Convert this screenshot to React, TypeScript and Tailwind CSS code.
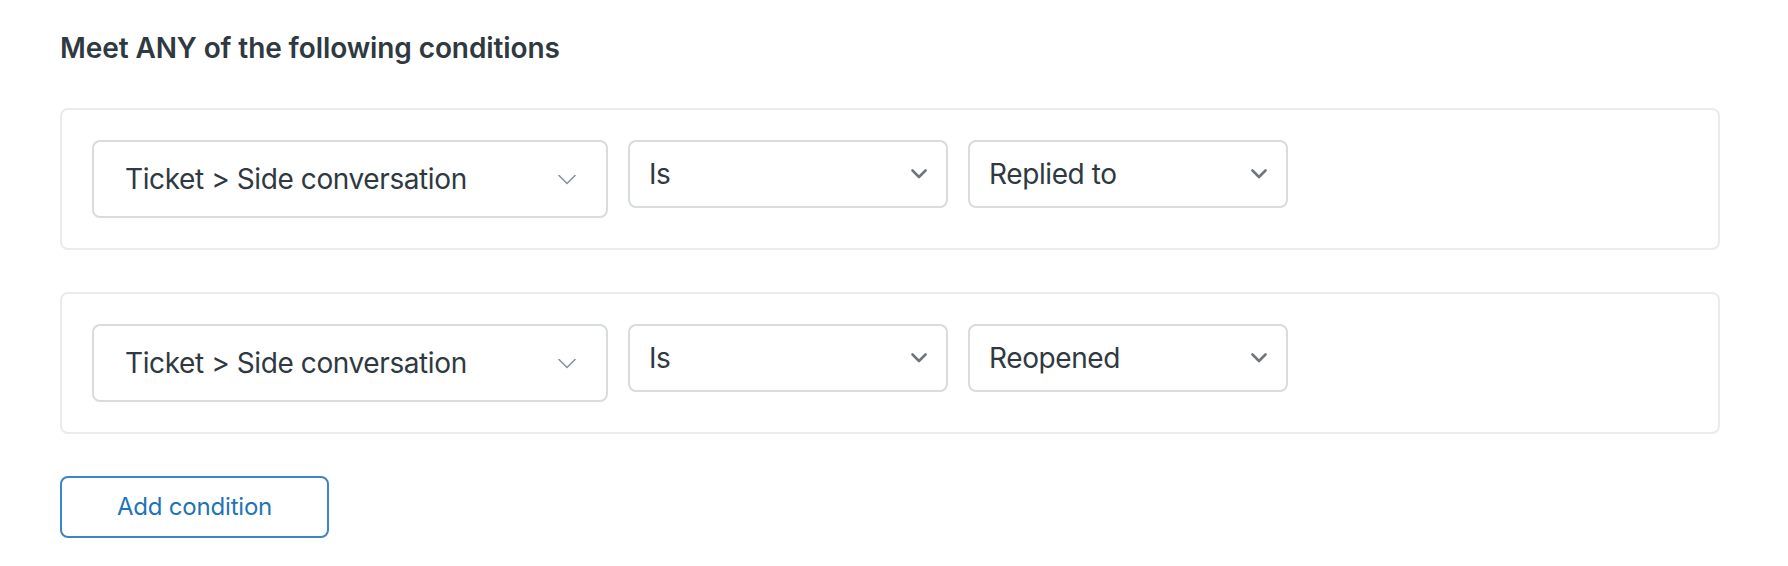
interface Condition {
  field: string;
  operator: string;
  value: string;
}

const CONDITIONS: Condition[] = [
  { field: 'Ticket > Side conversation', operator: 'Is', value: 'Replied to' },
  { field: 'Ticket > Side conversation', operator: 'Is', value: 'Reopened' },
];

function ThinChevron() {
  return (
    <svg width="18" height="11" viewBox="0 0 18 11" fill="none" className="shrink-0">
      <path d="M1 1.5 L9 9.5 L17 1.5" stroke="#87929d" strokeWidth="1.6" strokeLinecap="round" strokeLinejoin="round" />
    </svg>
  );
}

function BoldChevron() {
  return (
    <svg width="16" height="10" viewBox="0 0 16 10" fill="none" className="shrink-0">
      <path d="M1.5 1.5 L8 8 L14.5 1.5" stroke="#6f767c" strokeWidth="2.6" strokeLinecap="round" strokeLinejoin="round" />
    </svg>
  );
}

export default function App() {
  return (
    <div className="w-[1788px] h-[566px] bg-white pl-[60px] pt-[30px] font-['Inter',sans-serif] text-[#2f3941]">
      <h2 className="text-[28px] leading-[36px] font-semibold tracking-[-0.1px]">Meet ANY of the following conditions</h2>

      <div className="mt-[42px] flex flex-col gap-[42px] w-[1660px]">
        {CONDITIONS.map((c, i) => (
          <div key={i} className="rounded-[8px] border-2 border-[#e9ebed] p-[30px] flex items-start gap-[20px]">
            <div className="w-[516px] h-[78px] rounded-[8px] border-2 border-[#d8dcde] pl-[31px] pr-[30px] flex items-center justify-between">
              <span className="text-[28px] tracking-[-0.4px]">{c.field}</span>
              <ThinChevron />
            </div>
            <div className="w-[320px] h-[68px] rounded-[8px] border-2 border-[#d8dcde] pl-[19px] pr-[19px] flex items-center justify-between">
              <span className="text-[28px] tracking-[-0.4px]">{c.operator}</span>
              <BoldChevron />
            </div>
            <div className="w-[320px] h-[68px] rounded-[8px] border-2 border-[#d8dcde] pl-[19px] pr-[19px] flex items-center justify-between">
              <span className="text-[28px] tracking-[-0.4px]">{c.value}</span>
              <BoldChevron />
            </div>
          </div>
        ))}
      </div>

      <button className="mt-[42px] w-[269px] h-[62px] rounded-[8px] border-2 border-[#3a86c6] text-[#1f73b7] text-[24px] tracking-[-0.2px] flex items-center justify-center">
        Add condition
      </button>
    </div>
  );
}
